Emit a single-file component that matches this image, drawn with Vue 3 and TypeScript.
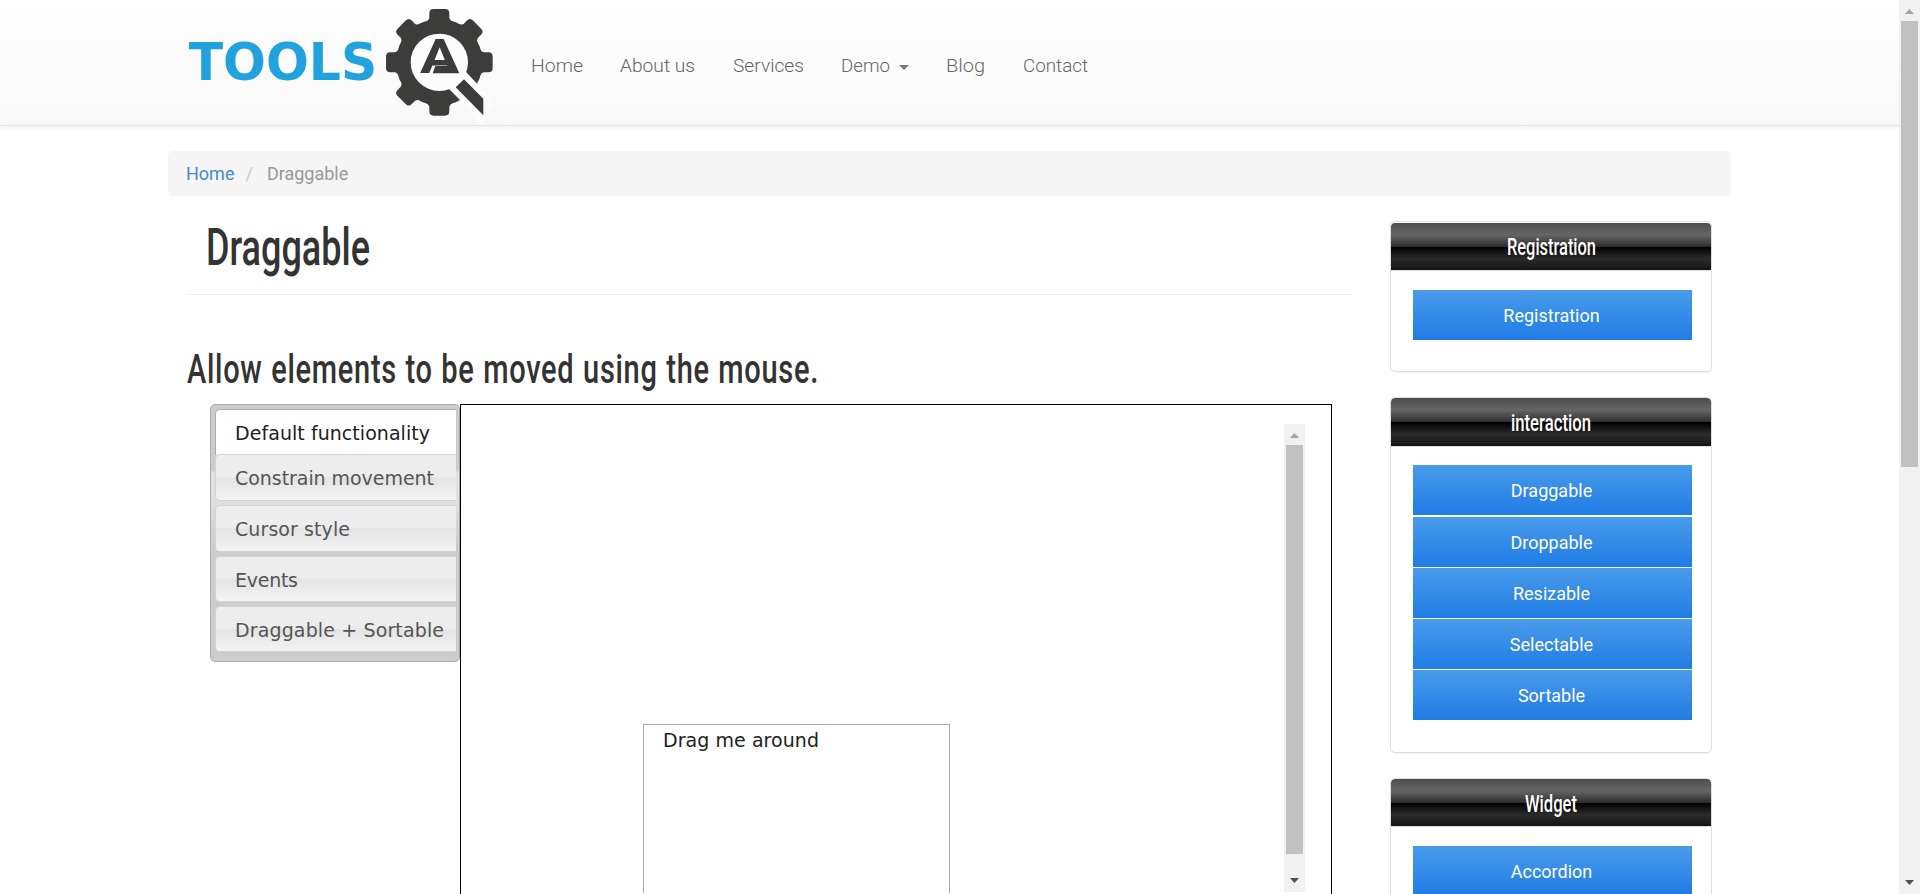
<script setup lang="ts">
interface NavItem { label: string; width: number; caret?: boolean }
interface Panel { title: string; width: number; links: string[] }

const nav: NavItem[] = [
  { label: 'Home', width: 52 },
  { label: 'About us', width: 75 },
  { label: 'Services', width: 71 },
  { label: 'Demo', width: 49, caret: true },
  { label: 'Blog', width: 39 },
  { label: 'Contact', width: 65 },
]
const tabs: { label: string; width: number }[] = [
  { label: 'Default functionality', width: 195 },
  { label: 'Constrain movement', width: 199 },
  { label: 'Cursor style', width: 115 },
  { label: 'Events', width: 63 },
  { label: 'Draggable + Sortable', width: 209 },
]
const panels: Panel[] = [
  { title: 'Registration', width: 89, links: ['Registration'] },
  { title: 'interaction', width: 80, links: ['Draggable', 'Droppable', 'Resizable', 'Selectable', 'Sortable'] },
  { title: 'Widget', width: 52, links: ['Accordion'] },
]
const teeth = [0, 45, 90, 180, 225, 270, 315]
</script>

<template>
  <div class="page">
    <div class="content">
      <header class="navbar">
        <svg class="logo" width="320" height="125" viewBox="60 0 960 375">
          <text class="word" x="86" y="240" textLength="566" lengthAdjust="spacingAndGlyphs">TOOLS</text>
          <g class="gear">
            <circle cx="838" cy="187" r="130" />
            <path
              v-for="a in teeth"
              :key="a"
              :transform="`rotate(${a} 838 187)`"
              d="M780 75 Q804 66 808 54 L808 40 Q808 27 821 27 L855 27 Q868 27 868 40 L868 54 Q872 66 896 75 Z"
            />
          </g>
          <path class="gap" d="M838 187 L868 268 L900 300 L960 375 L1010 310 L952 252 L918 216 Z" />
          <circle class="gap" cx="838" cy="187" r="86" />
          <path class="gear" d="M912 238 L970 296 L970 346 L887 262 Z" />
          <text class="mark" x="780" y="220" textLength="118" lengthAdjust="spacingAndGlyphs">A</text>
          <path class="gear" d="M826 198 L880 198 L896 220 L818 220 Z" />
        </svg>
        <nav class="links">
          <a v-for="n in nav" :key="n.label" class="link" :style="{ width: n.width + 'px' }">
            <svg class="t" :width="n.width" height="28">
              <text x="0" y="20" :textLength="n.width" lengthAdjust="spacingAndGlyphs">{{ n.label }}</text>
            </svg>
            <i v-if="n.caret" class="caret"></i>
          </a>
        </nav>
      </header>

      <div class="breadcrumb">
        <span class="crumb-home">Home</span><span class="slash">/</span><span class="crumb">Draggable</span>
      </div>

      <div class="columns">
        <main class="main">
          <h1><svg class="t" width="164" height="72"><text x="0" y="44" textLength="164" lengthAdjust="spacingAndGlyphs">Draggable</text></svg></h1>
          <h2><svg class="t" width="640" height="56"><text x="0" y="39" textLength="632" lengthAdjust="spacingAndGlyphs">Allow elements to be moved using the mouse.</text></svg></h2>
          <div class="demo">
            <ul class="tabs">
              <li v-for="(tab, i) in tabs" :key="tab.label" :class="['tab', 'tab' + i, { active: i === 0 }]">
                <svg class="t" width="212" height="30"><text x="0" y="19" :textLength="tab.width" lengthAdjust="spacing">{{ tab.label }}</text></svg>
              </li>
            </ul>
            <section class="stage">
              <div class="dragbox">
                <svg class="t" width="180" height="30"><text x="0" y="21" textLength="156" lengthAdjust="spacing">Drag me around</text></svg>
              </div>
              <div class="scroll inner"><i class="up"></i><i class="thumb"></i><i class="down"></i></div>
            </section>
          </div>
        </main>

        <aside class="side">
          <section v-for="(p, i) in panels" :key="p.title" :class="['panel', 'panel' + i]">
            <h3>
              <svg class="t" :width="p.width" height="30"><text x="0" y="24" :textLength="p.width" lengthAdjust="spacingAndGlyphs">{{ p.title }}</text></svg>
            </h3>
            <ul class="menu">
              <li v-for="l in p.links" :key="l">{{ l }}</li>
            </ul>
          </section>
        </aside>
      </div>
    </div>
    <div class="scroll outer"><i class="up"></i><i class="thumb"></i><i class="down"></i></div>
  </div>
</template>

<style>
html, body { margin: 0; overflow: hidden; }
</style>

<style scoped>
* { box-sizing: border-box; }
.page { display: flex; width: 1920px; height: 894px; overflow: hidden; background: #fff; font-family: Roboto, "Liberation Sans", sans-serif; font-size: 18px; font-weight: 400; color: #333; }
.content { width: 1899px; height: 894px; overflow: hidden; }
.t { display: block; overflow: visible; fill: currentColor; }
ul { list-style: none; margin: 0; padding: 0; }
h1, h2, h3 { margin: 0; font-weight: 500; }

.navbar { display: flex; height: 126px; padding-left: 180px; border-bottom: 1px solid #e5e5e5; background: linear-gradient(#fff, #f8f8f8); box-shadow: 0 1px 5px rgba(0, 0, 0, .075); }
.logo { flex: none; display: block; }
.word { fill: #1fa2de; font: 700 156px "DejaVu Sans", sans-serif; }
.gear { fill: #3c3c3b; }
.gap { fill: #fcfcfc; }
.mark { fill: #3c3c3b; font: 700 144px Roboto, sans-serif; }
.links { display: flex; gap: 38px; padding: 52px 0 0 31px; color: #666; font-size: 19px; font-weight: 300; }
.link { position: relative; height: 28px; }
.link:nth-child(2) { margin-left: -1px; }
.link:nth-child(4) { margin-left: -1px; }
.link:nth-child(5) { margin-left: 18px; }
.caret { position: absolute; left: 58px; top: 13px; border: 5px solid transparent; border-top-color: #777; border-bottom: 0; }

.breadcrumb { display: flex; align-items: center; width: 1563px; height: 45px; margin: 25px 0 0 168px; padding: 0 19px 0 18px; border-radius: 5px; background: #f5f5f5; font-size: 18px; }
.crumb-home { color: #428bca; }
.slash { margin: 0 14px 0 11px; color: #ccc; }
.crumb { color: #999; }

.columns { display: flex; padding-left: 187px; }
.main { width: 1165px; }
h1 { height: 99px; padding: 25px 0 0 19px; border-bottom: 1px solid #eee; font-size: 52px; }
h2 { height: 109px; padding: 49px 0 0; font-size: 41px; letter-spacing: 1px; word-spacing: 1px; }
.demo { display: flex; padding-left: 23px; }
.tabs { display: flex; flex-direction: column; width: 250px; height: 258px; padding: 4px 3px 0 4px; border: 1px solid #aaa; border-radius: 5px; background: linear-gradient(#ccc 0 66px, #e4e4e4 67px, #e0e0e0 95px, #ccc 142px); font-family: "DejaVu Sans", sans-serif; font-size: 19px; font-weight: 400; }
.tab { height: 46px; margin-bottom: 4px; padding: 11px 0 0 19px; border: 1px solid #d3d3d3; border-right: 0; border-radius: 5px 0 0 5px; background: linear-gradient(#ededed 0 48%, #e4e4e4 52%, #f3f3f3 100%); color: #555; }
.tab.active { height: 46px; margin-bottom: -1px; border-color: #aaa; border-bottom: 0; border-bottom-left-radius: 0; background: #fff; color: #212121; }
.tab1 { height: 47px; }
.tab2 { height: 47px; }

.stage { display: flex; justify-content: space-between; width: 872px; height: 600px; padding: 19px 26px 0 182px; border: 1px solid #000; color: #222; font-family: "DejaVu Sans", sans-serif; font-size: 19px; font-weight: 400; }
.dragbox { width: 307px; height: 169px; margin-top: 300px; padding: 1px 0 0 19px; border: 1px solid #aaa; border-bottom: 0; }

.side { width: 322px; margin-left: 38px; padding-top: 25px; }
.panel { margin-bottom: 25px; padding-top: 1px; border: 1px solid #ddd; border-radius: 5px; overflow: hidden; box-shadow: 0 1px 1px rgba(0, 0, 0, .05); }
.panel0 { height: 151px; }
.panel1, .panel2 { padding-top: 0; height: 356px; }
.panel h3 { display: flex; justify-content: center; height: 48px; padding-top: 8px; border-bottom: 1px solid #ddd; border-radius: 4px 4px 0 0; color: #fff; font-size: 23px; background: linear-gradient(#4c4c4c 0%, #595959 12%, #666 25%, #474747 39%, #2c2c2c 50%, #000 51%, #111 60%, #2b2b2b 76%, #1c1c1c 91%, #131313 100%); }
.panel1 h3 { height: 49px; padding-top: 9px; }
.panel2 h3 { padding-top: 9px; }
.menu { display: grid; gap: 1px; width: 279px; margin: 19px 0 0 22px; }
.panel1 .menu { margin-top: 18px; }
.menu li { height: 50px; padding-right: 2px; line-height: 51px; text-align: center; color: #fff; background: linear-gradient(#499bea, #207ce5); }
.panel1 .menu li:first-child { margin-bottom: 1px; }

.scroll { position: relative; display: flex; flex-direction: column; align-items: center; width: 21px; background: #f1f1f1; }
.outer { height: 894px; }
.inner { height: 468px; }
.up { flex: none; width: 9px; height: 5px; margin: 9px 0 7px; background: #a3a3a3; clip-path: polygon(50% 0, 100% 100%, 0 100%); }
.thumb { flex: none; width: 17px; height: 446px; background: #c1c1c1; }
.inner .thumb { height: 409px; }
.down { width: 9px; height: 5px; margin: auto 0 9px; background: #505050; clip-path: polygon(0 0, 100% 0, 50% 100%); }
</style>
